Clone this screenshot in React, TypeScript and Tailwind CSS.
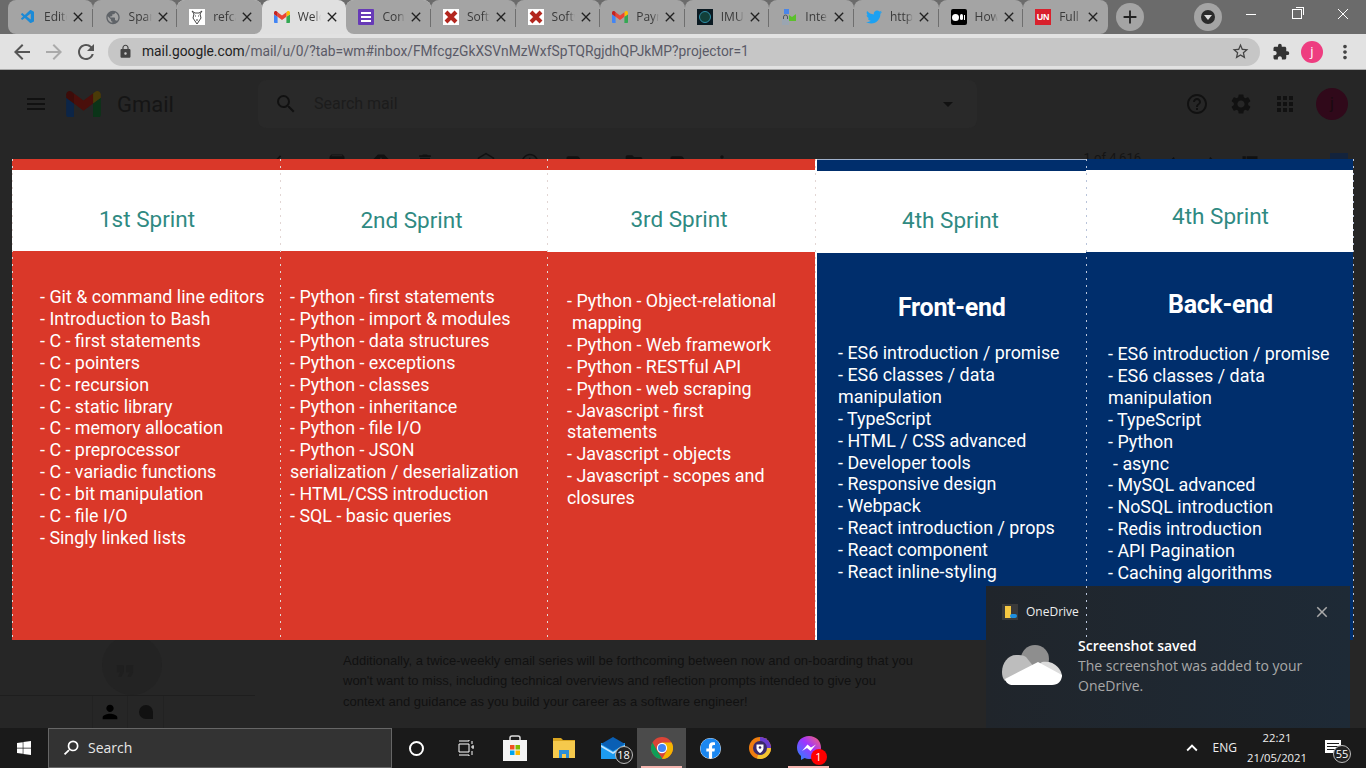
import type { ReactNode } from "react";
import {
  MdArchive,
  MdArrowBack,
  MdArrowForward,
  MdApps,
  MdChevronLeft,
  MdChevronRight,
  MdClose,
  MdDelete,
  MdDrafts,
  MdExtension,
  MdHelpOutline,
  MdLabel,
  MdLock,
  MdMenu,
  MdMoreVert,
  MdPerson,
  MdPublic,
  MdRefresh,
  MdReport,
  MdSchedule,
  MdSearch,
  MdSettings,
  MdStarBorder,
  MdViewList,
  MdAdd,
  MdArrowDropDown,
  MdKeyboardArrowUp,
  MdDriveFileMove,
  MdFormatQuote,
} from "react-icons/md";
import { FaFacebook, FaTwitter, FaWindows } from "react-icons/fa";
import { VscVscode } from "react-icons/vsc";

function GmailM({ dim = false, className }: { dim?: boolean; className?: string }) {
  return (
    <svg viewBox="0 0 24 18" className={className}>
      <path fill={dim ? "#0c2547" : "#4285f4"} d="M1.6 18H5.4V8.7L0 4.7V16.4C0 17.3.7 18 1.6 18Z" />
      <path fill={dim ? "#0b3418" : "#34a853"} d="M18.6 18H22.4C23.3 18 24 17.3 24 16.4V4.7L18.6 8.7Z" />
      <path fill={dim ? "#4a3a08" : "#fbbc04"} d="M18.6 1.7V8.7L24 4.7V2.5C24 .5 21.7-.7 20.1.5Z" />
      <path fill={dim ? "#4a0f0b" : "#ea4335"} d="M5.4 8.7V1.7L12 6.6L18.6 1.7V8.7L12 13.6Z" />
      <path fill={dim ? "#3d0c09" : "#c5221f"} d="M0 2.5V4.7L5.4 8.7V1.7L3.9.5C2.3-.7 0 .5 0 2.5Z" />
    </svg>
  );
}

function RedX() {
  return (
    <div className="w-4 h-4 bg-white flex items-center justify-center">
      <svg viewBox="0 0 16 16" className="w-4 h-4">
        <path d="M3 3L13 13M13 3L3 13" stroke="#b3261e" strokeWidth="4" />
      </svg>
    </div>
  );
}

function ChromeLogo({ className }: { className?: string }) {
  return (
    <svg viewBox="0 0 24 24" className={className}>
      <circle cx="12" cy="12" r="12" fill="#db4437" />
      <path fill="#0f9d58" d="M12 24A12 12 0 0 1 1.6 6L7 15.5L12.5 24Z" />
      <path fill="#f4b400" d="M12 6H22.4A12 12 0 0 1 12 24L17.2 15Z" />
      <circle cx="12" cy="12" r="5.6" fill="#fff" />
      <circle cx="12" cy="12" r="4.4" fill="#4285f4" />
    </svg>
  );
}

const tabs: { title: string; icon: ReactNode; active?: boolean }[] = [
  { title: "Editor", icon: <VscVscode className="w-4 h-4 text-[#1c8ad6]" /> },
  { title: "Spanish", icon: <MdPublic className="w-[17px] h-[17px] text-[#5f6368]" /> },
  {
    title: "refcard",
    icon: (
      <div className="w-4 h-4 bg-white flex items-center justify-center">
        <svg viewBox="0 0 16 16" className="w-4 h-4" fill="none" stroke="#444" strokeWidth="1">
          <path d="M3 2L5 5L4 9L8 15L12 9L11 5L13 2L10 4H6Z" />
          <path d="M6 7H7M9 7H10M7 11H9" />
        </svg>
      </div>
    ),
  },
  { title: "Welcome", icon: <GmailM className="w-4 h-3" />, active: true },
  {
    title: "Contact",
    icon: (
      <div className="w-4 h-4 bg-[#673ab7] rounded-[1px] flex flex-col justify-center gap-[2px] px-[3px]">
        <div className="h-[2px] bg-white" />
        <div className="h-[2px] bg-white" />
        <div className="h-[2px] bg-white" />
      </div>
    ),
  },
  { title: "Software", icon: <RedX /> },
  { title: "Software", icon: <RedX /> },
  { title: "Payment", icon: <GmailM className="w-4 h-3" /> },
  {
    title: "IMUL",
    icon: (
      <div className="w-4 h-4 bg-[#0b1a22] flex items-center justify-center">
        <div className="w-3 h-3 rounded-full border border-[#2f8fa8] bg-[#12403a]" />
      </div>
    ),
  },
  {
    title: "Internet",
    icon: (
      <svg viewBox="0 0 16 16" className="w-4 h-4">
        <path fill="#4a86e8" d="M3 0H8V5H3Z" />
        <path fill="#5cc02c" d="M8 6L11 8L15 5V12H8Z" />
        <rect x="1" y="10" width="7" height="6" fill="#9aa5b1" />
        <path d="M2.5 10V8A2 2 0 0 1 6.5 8V10" fill="none" stroke="#4b5563" />
      </svg>
    ),
  },
  { title: "https", icon: <FaTwitter className="w-4 h-4 text-[#1da1f2]" /> },
  {
    title: "How",
    icon: (
      <div className="w-4 h-4 bg-black rounded-[2px] flex items-center justify-center gap-[1px]">
        <div className="w-[7px] h-[7px] rounded-full bg-white" />
        <div className="w-[3px] h-[6px] rounded-full bg-white" />
        <div className="w-[1px] h-[5px] bg-white" />
      </div>
    ),
  },
  {
    title: "Full",
    icon: (
      <div className="w-4 h-4 bg-[#d9202c] flex items-center justify-center text-white text-[9px] font-bold leading-none font-['Liberation_Sans',sans-serif]">
        UN
      </div>
    ),
  },
];

function TabStrip() {
  return (
    <div className="h-[34px] bg-[#6b6b6b] flex shrink-0 pl-2 font-['Open_Sans',sans-serif]">
      {tabs.map((tab, i) => {
        const nextActive = tabs[i + 1]?.active;
        const prevActive = tabs[i - 1]?.active;
        const first = i === 0;
        const last = i === tabs.length - 1;
        return (
          <div key={i} className={prevActive || nextActive ? "bg-[#e0e0e0] rounded-t-lg" : ""}>
            <div
              className={`w-[84.6px] h-[34px] rounded-t-lg relative flex items-center pl-3 ${
                tab.active ? "bg-[#e0e0e0]" : "bg-[#a4a4a4]"
              } ${nextActive ? "rounded-br-lg" : ""} ${prevActive || first ? "rounded-bl-lg" : ""} ${
                last ? "rounded-br-lg" : ""
              }`}
            >
              <div className="w-4 h-4 flex items-center justify-center shrink-0">{tab.icon}</div>
              <div className="ml-2 w-[23px] overflow-hidden whitespace-nowrap text-xs text-[#3a3a3a] [mask-image:linear-gradient(to_right,black_70%,transparent)]">
                {tab.title}
              </div>
              <MdClose className="w-4 h-4 ml-[3px] text-[#222]" />
              {!tab.active && !nextActive && !last && (
                <div className="absolute right-0 top-[9px] w-px h-[18px] bg-[#6f6f6f]" />
              )}
            </div>
          </div>
        );
      })}
      <div className="ml-2 mt-[3px] w-7 h-7 rounded-full bg-[#a4a4a4] flex items-center justify-center">
        <MdAdd className="w-[22px] h-[22px] text-[#222]" />
      </div>
      <div className="ml-[50px] mt-[3px] w-7 h-7 rounded-full bg-[#a4a4a4] flex items-center justify-center">
        <div className="w-[14px] h-[14px] rounded-full bg-[#2b2b2b] flex items-center justify-center">
          <div className="w-0 h-0 border-x-[4px] border-x-transparent border-t-[5px] border-t-[#ddd] mt-[1px]" />
        </div>
      </div>
      <div className="ml-auto flex h-[28px] text-white">
        <div className="w-[46px] flex items-center justify-center">
          <div className="w-[10px] h-px bg-white" />
        </div>
        <div className="w-[46px] flex items-center justify-center">
          <div className="relative w-[10px] h-[10px] border border-white">
            <div className="absolute -top-[3px] -right-[3px] w-[8px] h-[8px] border-t border-r border-white" />
          </div>
        </div>
        <div className="w-[46px] flex items-center justify-center">
          <svg viewBox="0 0 12 12" className="w-3 h-3" stroke="white" strokeWidth="1">
            <path d="M1 1L11 11M11 1L1 11" />
          </svg>
        </div>
      </div>
    </div>
  );
}

function Toolbar() {
  return (
    <div className="h-9 bg-[#e2e2e2] border-b border-[#a9a9a9] flex items-center shrink-0 pl-[10px] pr-[10px] font-['Open_Sans',sans-serif]">
      <MdArrowBack className="w-6 h-6 text-[#555]" />
      <MdArrowForward className="w-6 h-6 ml-2 text-[#aaa]" />
      <MdRefresh className="w-6 h-6 ml-2 text-[#555]" />
      <div className="ml-[10px] h-7 flex-1 rounded-full bg-[#c6c6c6] flex items-center pl-[10px] pr-[10px]">
        <MdLock className="w-[15px] h-[15px] text-[#444]" />
        <div className="ml-[9px] text-[13.8px] text-[#5a5a66] whitespace-nowrap font-['Roboto',sans-serif]">
          <span className="text-[#222]">mail.google.com</span>/mail/u/0/?tab=wm#inbox/FMfcgzGkXSVnMzWxfSpTQRgjdhQPJkMP?projector=1
        </div>
        <MdStarBorder className="ml-auto w-[19px] h-[19px] text-[#444]" />
      </div>
      <MdExtension className="ml-[12px] w-[18px] h-[18px] text-[#333]" />
      <div className="ml-[11px] w-[22px] h-[22px] rounded-full bg-[#ee3d80] text-white text-[13px] flex items-center justify-center">
        j
      </div>
      <MdMoreVert className="ml-[11px] w-[22px] h-[22px] text-[#444]" />
    </div>
  );
}

function GmailBackground() {
  return (
    <div className="h-full flex flex-col bg-[#262626] text-[#111] font-['Roboto',sans-serif]">
      <div className="h-[68px] shrink-0 flex items-center pl-[24px] pr-[18px]">
        <MdMenu className="w-6 h-6" />
        <GmailM dim className="ml-[18px] w-[35px] h-[26px]" />
        <div className="ml-4 text-[22px] text-[#151515]">Gmail</div>
        <div className="ml-[84px] w-[719px] h-[48px] rounded-lg bg-[#292929] flex items-center pl-4 pr-[17px]">
          <MdSearch className="w-6 h-6" />
          <div className="ml-4 text-base text-[#1c1c1c]">Search mail</div>
          <MdArrowDropDown className="ml-auto w-6 h-6" />
        </div>
        <MdHelpOutline className="ml-auto w-6 h-6" />
        <MdSettings className="ml-5 w-6 h-6" />
        <MdApps className="ml-5 w-6 h-6" />
        <div className="ml-[19px] w-8 h-8 rounded-full bg-[#30091a] flex items-center justify-center text-[#1a0a10]">
          j
        </div>
      </div>
      <div className="h-[20px] mt-[14px] shrink-0 flex items-center pl-[270px] pr-[18px] gap-[24px]">
        <MdArrowBack className="w-5 h-5" />
        <MdArchive className="ml-[13px] w-5 h-5" />
        <MdReport className="w-5 h-5" />
        <MdDelete className="w-5 h-5" />
        <MdDrafts className="ml-[17px] w-5 h-5" />
        <MdSchedule className="w-5 h-5" />
        <MdLabel className="w-5 h-5" />
        <MdDriveFileMove className="ml-[16px] w-5 h-5" />
        <MdLabel className="w-5 h-5" />
        <MdMoreVert className="w-5 h-5" />
        <div className="ml-auto text-[13px] text-[#141414] -translate-y-[4px]">1 of 4,616</div>
        <MdChevronLeft className="-ml-[3px] w-5 h-5" />
        <MdChevronRight className="-ml-[4px] w-5 h-5" />
        <MdViewList className="-ml-[6px] w-5 h-5" />
        <div className="ml-[46px] w-[18px] h-[18px] bg-[#13233c]" />
      </div>
      <div className="mt-auto flex h-[96px]">
        <div className="w-[255px] flex flex-col">
          <div className="h-[63px] flex pl-[102px]">
            <div className="w-[60px] h-[60px] mt-[3px] rounded-full bg-[#232323] flex items-center justify-center">
              <MdFormatQuote className="w-7 h-7 text-[#1f1f1f] -translate-x-[7px] translate-y-[6px]" />
            </div>
          </div>
          <div className="flex-1 border-t border-[#1e1e1e] flex pl-[92px]">
            <div className="w-[36px] flex items-center justify-center border-x border-[#222]">
              <MdPerson className="w-[22px] h-[22px] text-black" />
            </div>
            <div className="w-[36px] flex items-center justify-center border-r border-[#222]">
              <div className="w-[14px] h-[14px] rounded-full rounded-br-none bg-[#111]" />
            </div>
          </div>
        </div>
        <div className="pl-[88px] pt-[19px] text-[13px] leading-[20.4px] text-[#111] font-['Liberation_Sans',sans-serif] whitespace-nowrap">
          <div>Additionally, a twice-weekly email series will be forthcoming between now and on-boarding that you</div>
          <div>won't want to miss, including technical overviews and reflection prompts intended to give you</div>
          <div>context and guidance as you build your career as a software engineer!</div>
        </div>
      </div>
    </div>
  );
}

type SprintColumn = {
  title: string;
  width: string;
  blue?: boolean;
  band: string;
  header: string;
  titleShift: string;
  bodyPad: string;
  heading?: { text: string; pad: string };
  lines: { text: string; pad?: string }[];
};

const columns: SprintColumn[] = [
  {
    title: "1st Sprint",
    width: "w-[268px]",
    band: "h-[11px]",
    header: "h-[81px]",
    titleShift: "pt-[18px] translate-x-[1px]",
    bodyPad: "pt-[35px] pl-[28px]",
    lines: [
      { text: "- Git & command line editors" },
      { text: "- Introduction to Bash" },
      { text: "- C - first statements" },
      { text: "- C - pointers" },
      { text: "- C - recursion" },
      { text: "- C - static library" },
      { text: "- C - memory allocation" },
      { text: "- C - preprocessor" },
      { text: "- C - variadic functions" },
      { text: "- C - bit manipulation" },
      { text: "- C - file I/O" },
      { text: "- Singly linked lists" },
    ],
  },
  {
    title: "2nd Sprint",
    width: "w-[267px]",
    band: "h-[11px]",
    header: "h-[81px]",
    titleShift: "pt-[20px] -translate-x-[2px]",
    bodyPad: "pt-[35px] pl-[10px]",
    lines: [
      { text: "- Python - first statements" },
      { text: "- Python - import & modules" },
      { text: "- Python - data structures" },
      { text: "- Python - exceptions" },
      { text: "- Python - classes" },
      { text: "- Python - inheritance" },
      { text: "- Python - file I/O" },
      { text: "- Python - JSON" },
      { text: "serialization / deserialization" },
      { text: "- HTML/CSS introduction" },
      { text: "- SQL - basic queries" },
    ],
  },
  {
    title: "3rd Sprint",
    width: "w-[268px]",
    band: "h-[11px]",
    header: "h-[82px]",
    titleShift: "pt-[18px] -translate-x-[2px]",
    bodyPad: "pt-[38px] pl-[20px]",
    lines: [
      { text: "- Python - Object-relational" },
      { text: "mapping", pad: "pl-[5px]" },
      { text: "- Python - Web framework" },
      { text: "- Python - RESTful API" },
      { text: "- Python - web scraping" },
      { text: "- Javascript - first" },
      { text: "statements" },
      { text: "- Javascript - objects" },
      { text: "- Javascript - scopes and" },
      { text: "closures" },
    ],
  },
  {
    title: "4th Sprint",
    width: "w-[269px]",
    blue: true,
    band: "h-[12px] border-t border-[#9fb1cc]",
    header: "h-[82px]",
    titleShift: "pt-[18px] -translate-x-[1px]",
    bodyPad: "pl-[21px]",
    heading: { text: "Front-end", pad: "pt-[41px] pb-[20px] pl-[81px]" },
    lines: [
      { text: "- ES6 introduction / promise" },
      { text: "- ES6 classes / data" },
      { text: "manipulation" },
      { text: "- TypeScript" },
      { text: "- HTML / CSS advanced" },
      { text: "- Developer tools" },
      { text: "- Responsive design" },
      { text: "- Webpack" },
      { text: "- React introduction / props" },
      { text: "- React component" },
      { text: "- React inline-styling" },
    ],
  },
  {
    title: "4th Sprint",
    width: "w-[267px]",
    blue: true,
    band: "h-[11px]",
    header: "h-[82px]",
    titleShift: "pt-[12px] translate-x-[1px]",
    bodyPad: "pl-[22px]",
    heading: { text: "Back-end", pad: "pt-[39px] pb-[24px] pl-[82px]" },
    lines: [
      { text: "- ES6 introduction / promise" },
      { text: "- ES6 classes / data" },
      { text: "manipulation" },
      { text: "- TypeScript" },
      { text: "- Python" },
      { text: "- async", pad: "pl-[5px]" },
      { text: "- MySQL advanced" },
      { text: "- NoSQL introduction" },
      { text: "- Redis introduction" },
      { text: "- API Pagination" },
      { text: "- Caching algorithms" },
    ],
  },
];

function DottedLine({ blue = false }: { blue?: boolean }) {
  return (
    <div
      className={`w-px shrink-0 relative z-10 -mr-px ${
        blue
          ? "bg-[repeating-linear-gradient(to_bottom,#b9c4da_0,#b9c4da_2px,transparent_2px,transparent_7px)]"
          : "bg-[repeating-linear-gradient(to_bottom,#e2d6d4_0,#e2d6d4_2px,transparent_2px,transparent_7px)]"
      }`}
    />
  );
}

function SprintSlide() {
  return (
    <div className="absolute left-3 top-[89px] w-[1341px] h-[481px] flex font-['Roboto',sans-serif] bg-white">
      {columns.map((col, i) => (
        <div key={i} className="contents">
          <DottedLine blue={i === 4} />
          {i === 3 && <div className="w-[2px] shrink-0 bg-white" />}
          <div className={`${col.width} shrink-0 flex flex-col ${col.blue ? "bg-[#002e6c]" : "bg-[#da3829]"}`}>
            <div className={`${col.band} shrink-0`} />
            <div className={`${col.header} shrink-0 bg-white flex items-center justify-center`}>
              <div className={`text-[22.5px] text-[#2f8a82] ${col.titleShift}`}>{col.title}</div>
            </div>
            {col.heading && (
              <div className={`${col.heading.pad} text-[25px] leading-[28px] font-bold tracking-[-0.3px] text-white`}>
                {col.heading.text}
              </div>
            )}
            <div className={`${col.bodyPad} text-[17.9px] leading-[21.9px] text-white whitespace-nowrap`}>
              {col.lines.map((line, j) => (
                <div key={j} className={line.pad}>
                  {line.text}
                </div>
              ))}
            </div>
          </div>
        </div>
      ))}
      <DottedLine blue />
    </div>
  );
}

function OneDriveToast() {
  return (
    <div className="absolute right-4 bottom-0 w-[364px] h-[142px] bg-gradient-to-r from-[#20252b] to-[#1e2a36] text-white font-['Open_Sans',sans-serif]">
      <div className="flex items-center h-[52px] pl-4 pr-[19px]">
        <div className="w-4 h-4 bg-[#3a3a3a] flex items-center justify-center relative">
          <div className="w-[6px] h-[12px] bg-[#f5c842] -translate-x-[2px]" />
          <div className="absolute right-[1px] bottom-[2px] w-[7px] h-[4px] rounded-full bg-[#1d8fe0]" />
        </div>
        <div className="ml-2 text-xs text-[#eee]">OneDrive</div>
        <MdClose className="ml-auto w-[18px] h-[18px] text-[#aaa]" />
      </div>
      <div className="flex pl-4">
        <svg viewBox="0 0 60 40" className="w-[60px] h-[40px] mt-[7px] shrink-0">
          <circle cx="33" cy="14" r="14" fill="#8e8e8e" />
          <path fill="#bdbdbd" d="M14 10C6 10 0 18 0 27C0 31 1 34 3 36L32 22L24 12C21 10 18 10 14 10Z" />
          <path fill="#dcdcdc" d="M40 17C52 15 60 24 60 32L36 20Z" />
          <path fill="#ffffff" d="M3 34L36 17L60 30C60 36 56 40 50 40H11C7 40 4 38 3 34Z" />
        </svg>
        <div className="ml-4 -mt-[2px]">
          <div className="text-sm font-semibold leading-5">Screenshot saved</div>
          <div className="text-sm leading-5 text-[#a8a8a8]">
            The screenshot was added to your
            <br />
            OneDrive.
          </div>
        </div>
      </div>
    </div>
  );
}

function TaskIcon({ children, active, running }: { children: ReactNode; active?: boolean; running?: boolean }) {
  return (
    <div className={`w-[49px] h-10 relative flex items-center justify-center ${active ? "bg-[#4b4b4b]" : ""}`}>
      {children}
      {running && <div className="absolute bottom-0 left-1 right-1 h-[2px] bg-[#f3b4ae]" />}
    </div>
  );
}

function Badge({ value, className }: { value: string; className: string }) {
  return (
    <div
      className={`absolute w-[18px] h-[18px] rounded-full border border-[#bbb] bg-[#222] text-white text-[11px] flex items-center justify-center ${className}`}
    >
      {value}
    </div>
  );
}

function Taskbar() {
  return (
    <div className="h-10 bg-[#1a1a1a] flex items-center shrink-0 text-white font-['Open_Sans',sans-serif]">
      <div className="w-12 flex items-center justify-center">
        <FaWindows className="w-4 h-4" />
      </div>
      <div className="w-[344px] h-10 bg-[#333] border border-[#666] flex items-center pl-3">
        <MdSearch className="w-[20px] h-[20px] -scale-x-100" />
        <div className="ml-[7px] text-sm text-[#e6e6e6]">Search</div>
      </div>
      <TaskIcon>
        <div className="w-[15px] h-[15px] rounded-full border-2 border-white" />
      </TaskIcon>
      <TaskIcon>
        <svg viewBox="0 0 16 16" className="w-4 h-4" fill="none" stroke="white">
          <path d="M1 1H11V0M1 15H11V16M1 4H11V12H1ZM14 1V4M14 6H16V8H14ZM14 11V15" />
        </svg>
      </TaskIcon>
      <TaskIcon>
        <svg viewBox="0 0 24 26" className="w-6 h-[26px]">
          <path d="M7 6V3A2 2 0 0 1 9 1H15A2 2 0 0 1 17 3V6" fill="none" stroke="#ddd" strokeWidth="1.5" />
          <rect y="5" width="24" height="21" fill="#f4f4f4" />
          <rect x="7" y="10" width="4.5" height="4.5" fill="#f25022" />
          <rect x="12.5" y="10" width="4.5" height="4.5" fill="#7fba00" />
          <rect x="7" y="15.5" width="4.5" height="4.5" fill="#00a4ef" />
          <rect x="12.5" y="15.5" width="4.5" height="4.5" fill="#ffb900" />
        </svg>
      </TaskIcon>
      <TaskIcon>
        <svg viewBox="0 0 22 20" className="w-[22px] h-5">
          <path fill="#d9a520" d="M0 0H8L10 2H22V6H0Z" />
          <rect y="3" width="22" height="17" fill="#f5c94c" />
          <path fill="#2b8fd8" d="M6 12H16V20H13V16H9V20H6Z" />
        </svg>
      </TaskIcon>
      <TaskIcon>
        <div className="relative">
          <svg viewBox="0 0 24 22" className="w-6 h-[22px]">
            <rect y="6" width="24" height="16" fill="#1d9bf0" />
            <path fill="#0a5fb4" d="M0 7L12 0L24 7L12 14Z" />
            <path fill="#bfe3ff" d="M0 8L12 15L24 8V10L12 17L0 10Z" />
          </svg>
          <Badge value="18" className="-right-2 -bottom-[5px]" />
        </div>
      </TaskIcon>
      <TaskIcon active running>
        <ChromeLogo className="w-[22px] h-[22px]" />
      </TaskIcon>
      <TaskIcon>
        <FaFacebook className="w-[21px] h-[21px] text-[#1b87f0] bg-white rounded-full" />
      </TaskIcon>
      <TaskIcon>
        <svg viewBox="0 0 22 22" className="w-[22px] h-[22px]">
          <circle cx="11" cy="11" r="11" fill="#ef7d0f" />
          <path fill="#6a3bd1" d="M11 0A11 11 0 0 1 22 11L11 11Z" />
          <path fill="#f4c430" d="M22 11A11 11 0 0 1 8 21.5L11 11Z" />
          <circle cx="11" cy="11" r="7" fill="#3b2a6b" />
          <path fill="white" d="M7.5 7.5H14.5V11C14.5 14 11 16 11 16S7.5 14 7.5 11Z" />
          <circle cx="11" cy="10.5" r="1.3" fill="#3b2a6b" />
        </svg>
      </TaskIcon>
      <TaskIcon running>
        <div className="relative">
          <svg viewBox="0 0 24 24" className="w-6 h-6">
            <defs>
              <linearGradient id="msgr" x1="0" y1="1" x2="1" y2="0">
                <stop offset="0" stopColor="#1e8bff" />
                <stop offset="0.55" stopColor="#a033ff" />
                <stop offset="1" stopColor="#ff6968" />
              </linearGradient>
            </defs>
            <path fill="url(#msgr)" d="M12 0C5 0 0 5 0 11.5C0 15 1.4 18 4 20V24L7.6 22C9 22.6 10.400 23 12 23C19 23 24 18 24 11.500C24 5 19 0 12 0Z" />
            <path fill="white" d="M5 15L10.500 8.500L14 11.500L19 8.500L13.500 15L10 12Z" />
          </svg>
          <div className="absolute -right-[6px] -bottom-[5px] w-4 h-4 rounded-full bg-[#f00] text-white text-[11px] flex items-center justify-center">
            1
          </div>
        </div>
      </TaskIcon>
      <div className="ml-auto flex items-center">
        <MdKeyboardArrowUp className="w-[22px] h-[22px] mr-[10px]" />
        <div className="text-xs mr-[8px] text-[#eee]">ENG</div>
        <div className="w-[64px] text-[11.3px] leading-[20px] text-center text-[#eee] whitespace-nowrap">
          <div>22:21</div>
          <div>21/05/2021</div>
        </div>
        <div className="w-[48px] mr-[9px] h-10 flex items-center justify-center relative">
          <svg viewBox="0 0 16 16" className="w-4 h-4" fill="white">
            <path d="M0 0H16V13H0ZM2 3V4H14V3ZM2 6V7H14V6ZM2 9V10H10V9Z" fillRule="evenodd" />
          </svg>
          <Badge value="55" className="right-[6px] top-[17px]" />
        </div>
      </div>
    </div>
  );
}

export default function App() {
  return (
    <div className="w-[1366px] h-[768px] flex flex-col overflow-hidden bg-[#262626]">
      <TabStrip />
      <Toolbar />
      <div className="flex-1 relative overflow-hidden">
        <GmailBackground />
        <SprintSlide />
        <OneDriveToast />
      </div>
      <Taskbar />
    </div>
  );
}
